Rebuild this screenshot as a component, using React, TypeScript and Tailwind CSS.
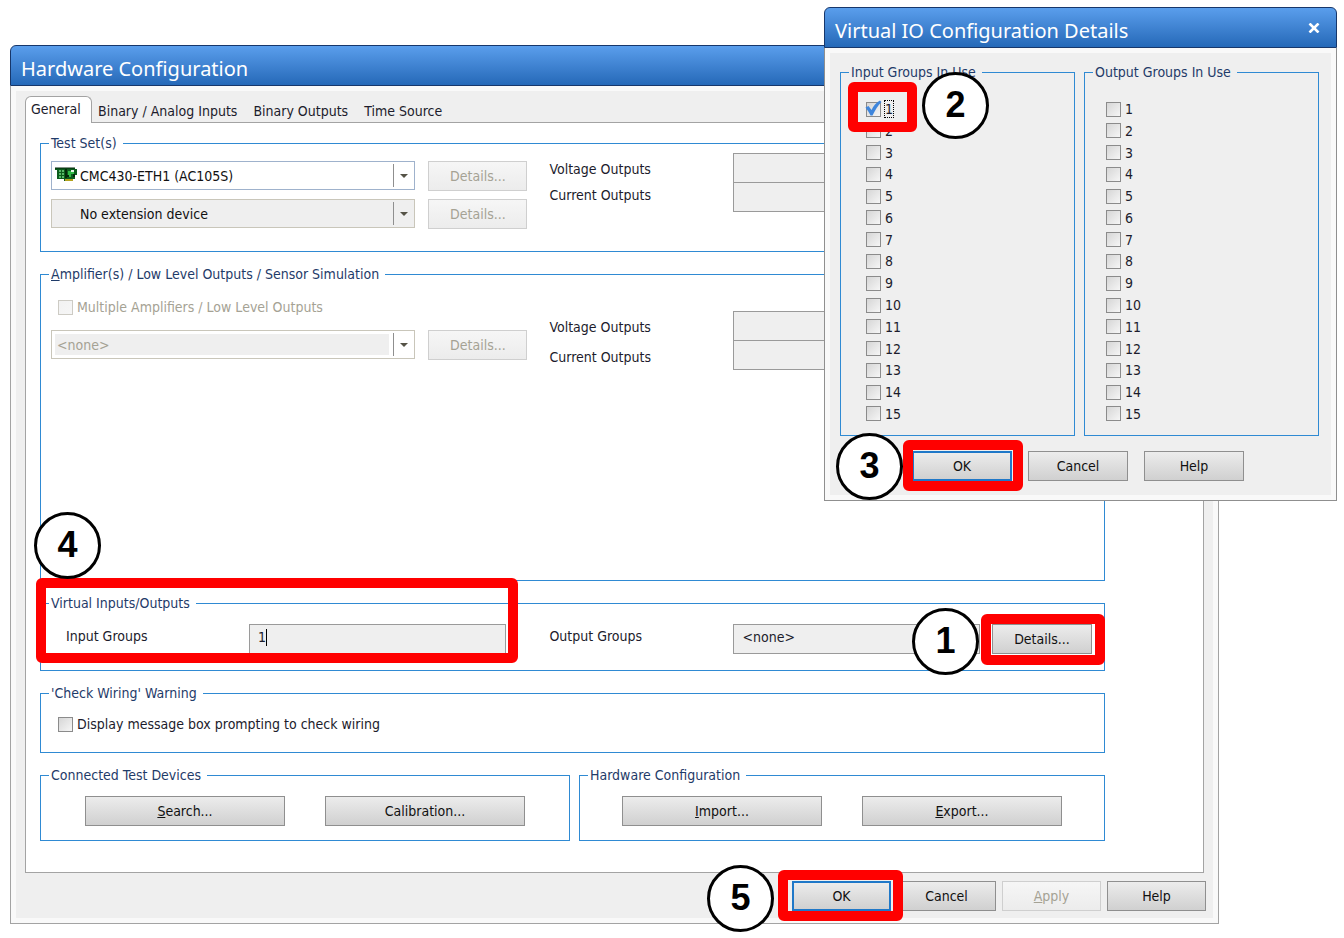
import { useState } from 'react';
import type { ReactNode } from 'react';
import clsx from 'clsx';

const GROUPS = Array.from({ length: 15 }, (_, i) => i + 1);

function Step({ n, className }: { n: number; className: string }) {
  return (
    <span
      className={clsx(
        'absolute z-20 flex size-[67px] items-center justify-center rounded-full border-[3px] border-black bg-white pb-[2px] font-["Liberation_Sans",sans-serif] text-[36px] leading-none font-bold text-black',
        className,
      )}
    >
      {n}
    </span>
  );
}

function Ring({ className }: { className: string }) {
  return <span className={clsx('pointer-events-none absolute z-10 rounded-md border-10 border-[#ff0000]', className)} />;
}

function TitleBar({ title, children }: { title: string; children?: ReactNode }) {
  return (
    <header className="flex h-[41px] items-center justify-between rounded-t-md border border-[#17376b] bg-linear-to-b from-[#5a9eec] to-[#2569b8] pr-4 pl-[10px]">
      <h1 className="pt-[6px] font-['Noto_Sans',sans-serif] text-xl leading-7 text-white">{title}</h1>
      {children}
    </header>
  );
}

function GroupBox({ title, className, children }: { title: ReactNode; className?: string; children: ReactNode }) {
  return (
    <fieldset className={clsx('relative min-w-0 border border-[#2f8ad3] px-[10px]', className)}>
      <legend className="-ml-[2px] pr-[6px] pl-[2px] leading-5 text-[#1f3b69]">{title}</legend>
      {children}
    </fieldset>
  );
}

type ButtonProps = {
  children: ReactNode;
  className?: string;
  disabled?: boolean;
  primary?: boolean;
};

function Button({ children, className, disabled, primary }: ButtonProps) {
  return (
    <button
      type="button"
      disabled={disabled}
      className={clsx(
        'h-[30px] shrink-0 border bg-linear-to-b text-center leading-5',
        disabled
          ? 'border-[#cfcfcf] from-[#f6f6f6] to-[#ececec] text-[#a5a294]'
          : 'from-[#ececec] to-[#d0d0d0] text-[#111]',
        !disabled && (primary ? 'border-2 border-[#1f78c8]' : 'border-[#8f8f8f]'),
        className,
      )}
    >
      {children}
    </button>
  );
}

type CheckBoxProps = {
  label: string;
  checked?: boolean;
  disabled?: boolean;
  focused?: boolean;
  className?: string;
};

function CheckBox({ label, checked = false, disabled, focused, className }: CheckBoxProps) {
  const [on, setOn] = useState(checked);
  return (
    <label className={clsx('flex h-4 items-center gap-1 leading-4', disabled && 'text-[#a5a294]', className)}>
      <span className="relative flex size-[15px]">
        <input
          type="checkbox"
          checked={on}
          disabled={disabled}
          onChange={(e) => setOn(e.target.checked)}
          className="size-[15px] appearance-none border border-[#8b8b8b] bg-linear-to-br from-[#d6d6d6] to-[#f6f6f6] disabled:border-[#cdcbc4] disabled:from-[#f2f2f2]"
        />
        {on && (
          <svg viewBox="0 0 17 17" className="pointer-events-none absolute -top-[2px] -left-px size-[17px]">
            <path d="M0.5 7.5L3.5 6L6.500 10C8.500 6 11 2.500 15 0.500L16.500 2C13 5 10 10.500 7.500 15.500L5.500 15.500C4 12.500 2.500 10 0.500 7.500Z" fill="#3f86dc" />
          </svg>
        )}
      </span>
      <span className={clsx(focused && 'outline-1 outline-dotted outline-black')}>{label}</span>
    </label>
  );
}

type ComboProps = {
  label: string;
  options: string[];
  icon?: ReactNode;
  variant: 'active' | 'plain' | 'disabled';
};

function Combo({ label, options, icon, variant }: ComboProps) {
  return (
    <div
      className={clsx(
        'relative h-[29px] min-w-0 flex-1 border',
        variant === 'active' && 'border-[#9fb2cc] bg-white',
        variant === 'plain' && 'border-[#c9c6ba] bg-[#efefef]',
        variant === 'disabled' && 'border-[#c9c6ba] bg-white p-[3px] pr-[25px]',
      )}
    >
      <select
        aria-label={label}
        disabled={variant === 'disabled'}
        className={clsx(
          'size-full appearance-none',
          variant === 'disabled' ? 'bg-[#efefef] pl-[2px] text-[#a5a294] opacity-100' : 'pl-7 text-[#111]',
        )}
      >
        {options.map((o) => (
          <option key={o}>{o}</option>
        ))}
      </select>
      {icon}
      <span className="pointer-events-none absolute inset-y-[2px] right-0 flex w-[21px] items-center justify-center border-l border-[#8f8f8f]">
        <svg viewBox="0 0 8 4" className="h-1 w-2">
          <path d="M0 0H8L4 4Z" fill="#555347" />
        </svg>
      </span>
    </div>
  );
}

function BoardIcon() {
  return (
    <svg viewBox="0 0 22 16" className="pointer-events-none absolute top-[5px] left-[3px] h-4 w-[22px]">
      <path d="M0 1H20V2H22V8H20V12H18V14H9V12H2V3H0Z" fill="#0b5c1c" />
      <path d="M4 3H6V5H4ZM7 3H9V5H7ZM4 6H6V8H4ZM7 6H9V8H7ZM4 9H6V11H4ZM7 9H9V11H7Z" fill="#58b868" />
      <path d="M10 2H12V11H10Z" fill="#032a0a" />
      <path d="M13 4H16V3H19V7H16V10H13Z" fill="#2fb845" />
      <path d="M16 3H19V5H16Z" fill="#e8f5e9" />
      <path d="M12 8H14V10H12ZM18 7H20V10H18Z" fill="#04260a" />
      <path d="M10 12H18V14H10Z" fill="#b3a21c" />
      <path d="M0 1H20" stroke="#04260a" />
    </svg>
  );
}

function OutputRows({ id, spread }: { id: string; spread?: boolean }) {
  return (
    <div className="flex min-w-0">
      <div className={clsx('flex w-[184px] shrink-0 flex-col pt-[6px]', spread ? 'gap-[10px]' : 'gap-[6px]')}>
        <label htmlFor={`${id}-voltage`} className="leading-5">Voltage Outputs</label>
        <label htmlFor={`${id}-current`} className="leading-5">Current Outputs</label>
      </div>
      <div className="flex min-w-0 flex-1 flex-col">
        <input id={`${id}-voltage`} readOnly className="h-[30px] w-full border border-[#9a9a9a] bg-[#efefef] px-2" />
        <input id={`${id}-current`} readOnly className="-mt-px h-[30px] w-full border border-[#9a9a9a] bg-[#efefef] px-2" />
      </div>
    </div>
  );
}

function HardwareWindow() {
  return (
    <section className="mr-[125px] ml-[10px] flex flex-col">
      <TitleBar title="Hardware Configuration" />
      <div className="border border-t-0 border-[#a3a3a3] bg-[#efefef] px-[14px] pt-[10px] pb-3 shadow-[inset_0_0_0_5px_#f9f9f9]">
        <nav className="relative z-[1] -mb-px flex items-end">
          <button type="button" className="h-[27px] w-[67px] rounded-t-md border border-b-0 border-[#a3a3a3] bg-white pb-[2px] pl-[5px] text-left leading-5">
            General
          </button>
          <div className="flex gap-4 pb-[2px] pl-[6px]">
            {['Binary / Analog Inputs', 'Binary Outputs', 'Time Source'].map((tab) => (
              <button key={tab} type="button" className="leading-5">{tab}</button>
            ))}
          </div>
        </nav>

        <div className="flex flex-col gap-3 border border-[#a3a3a3] bg-white pt-[10px] pr-[98px] pb-[31px] pl-[14px]">
          <GroupBox title="Test Set(s)" className="h-[119px]">
            <div className="grid grid-cols-[7fr_8fr] gap-x-[22px]">
              <div className="flex flex-col gap-2 pt-2">
                <div className="flex items-start gap-[13px]">
                  <Combo label="Test set" variant="active" options={['CMC430-ETH1 (AC105S)']} icon={<BoardIcon />} />
                  <Button disabled className="w-[99px]">Details...</Button>
                </div>
                <div className="flex items-start gap-[13px]">
                  <Combo label="Extension device" variant="plain" options={['No extension device']} />
                  <Button disabled className="w-[99px]">Details...</Button>
                </div>
              </div>
              <OutputRows id="test-set" />
            </div>
          </GroupBox>

          <GroupBox title={<><u>A</u>mplifier(s) / Low Level Outputs / Sensor Simulation</>} className="h-[317px]">
            <div className="grid grid-cols-[7fr_8fr] gap-x-[22px] pt-[15px]">
              <div className="flex flex-col gap-[15px]">
                <CheckBox label="Multiple Amplifiers / Low Level Outputs" disabled className="pl-[7px]" />
                <div className="flex items-start gap-[13px]">
                  <Combo label="Amplifier" variant="disabled" options={['<none>']} />
                  <Button disabled className="w-[99px]">Details...</Button>
                </div>
              </div>
              <div className="pt-3">
                <OutputRows id="amplifier" spread />
              </div>
            </div>
          </GroupBox>

          <GroupBox title="Virtual Inputs/Outputs" className="h-[78px]">
            <Ring className="-top-[35px] -left-[5px] h-[85px] w-[calc(45%+4px)]" />
            <Step n={4} className="-top-[101px] -left-[7px]" />
            <div className="grid grid-cols-[7fr_8fr] gap-x-[22px] pt-[11px]">
              <div className="flex pr-[21px] pl-[15px]">
                <label htmlFor="input-groups" className="w-[183px] shrink-0 pt-[2px] leading-5">Input Groups</label>
                <div className="flex h-[30px] min-w-0 flex-1 items-center border border-[#9a9a9a] bg-[#efefef] pb-1 pl-2">
                  <input id="input-groups" size={1} readOnly value="1" className="w-2 outline-none" />
                  <span className="h-[17px] w-px bg-black" />
                </div>
              </div>
              <div className="flex">
                <label htmlFor="output-groups" className="w-[184px] shrink-0 pt-[2px] leading-5">Output Groups</label>
                <input id="output-groups" readOnly value="<none>" className="h-[30px] min-w-0 flex-1 border border-[#9a9a9a] bg-[#efefef] px-2 pb-1 outline-none" />
                <div className="relative mr-[2px] ml-3">
                  <Button className="w-[100px]">Details...</Button>
                  <Ring className="-top-[10px] -right-[13px] -bottom-[11px] -left-[11px]" />
                  <Step n={1} className="-top-[16px] right-[113px]" />
                </div>
              </div>
            </div>
          </GroupBox>

          <GroupBox title="'Check Wiring' Warning" className="h-[70px]">
            <CheckBox label="Display message box prompting to check wiring" className="mt-[13px] pl-[7px]" />
          </GroupBox>

          <div className="grid grid-cols-[530fr_526fr] gap-[9px]">
            <GroupBox title="Connected Test Devices" className="h-[76px]">
              <div className="flex justify-center gap-10 pt-[11px]">
                <Button className="w-[200px]"><u>S</u>earch...</Button>
                <Button className="w-[200px]">Calibration...</Button>
              </div>
            </GroupBox>
            <GroupBox title="Hardware Configuration" className="h-[76px]">
              <div className="flex justify-center gap-10 pt-[11px]">
                <Button className="w-[200px]"><u>I</u>mport...</Button>
                <Button className="w-[200px]"><u>E</u>xport...</Button>
              </div>
            </GroupBox>
          </div>
        </div>

        <footer className="-mr-[2px] flex justify-end gap-[6px] pt-2">
          <div className="relative">
            <Button primary className="w-[99px]">OK</Button>
            <Ring className="-top-[11px] -right-[12px] -bottom-[10px] -left-[14px]" />
            <Step n={5} className="-top-[16px] right-[117px]" />
          </div>
          <Button className="w-[99px]">Cancel</Button>
          <Button disabled className="w-[99px]"><u>A</u>pply</Button>
          <Button className="w-[99px]">Help</Button>
        </footer>
      </div>
    </section>
  );
}

function GroupList({ title, checked, className }: { title: string; checked?: number; className: string }) {
  return (
    <GroupBox title={title} className="min-w-0 flex-1 pb-[13px]">
      <div className={clsx('box-content flex h-[321px] flex-col justify-between pt-[19px]', className)}>
        {GROUPS.map((n) => (
          <CheckBox key={n} label={String(n)} checked={n === checked} focused={n === checked} />
        ))}
      </div>
    </GroupBox>
  );
}

function DetailsDialog() {
  return (
    <section role="dialog" aria-label="Virtual IO Configuration Details" className="absolute top-[7px] right-[7px] z-30 w-[513px]">
      <TitleBar title="Virtual IO Configuration Details">
        <button type="button" aria-label="Close">
          <svg viewBox="0 0 12 10" className="h-[10px] w-3">
            <path d="M1.500 0.500L10.500 9.500M10.500 0.500L1.500 9.500" stroke="white" strokeWidth="2.600" />
          </svg>
        </button>
      </TitleBar>
      <div className="border border-t-0 border-[#8f8f8f] bg-[#efefef] pt-[14px] pr-[17px] pb-[19px] pl-[15px] shadow-[inset_0_0_0_5px_#f9f9f9]">
        <div className="relative flex gap-[9px]">
          <GroupList title="Input Groups In Use" checked={1} className="pl-[15px]" />
          <GroupList title="Output Groups In Use" className="pl-[11px]" />
          <Ring className="top-5 left-2 h-[50px] w-[69px]" />
          <Step n={2} className="top-[10px] left-[82px]" />
        </div>
        <div className="flex gap-4 pt-[15px] pl-[72px]">
          <div className="relative">
            <Button primary className="w-[100px]">OK</Button>
            <Ring className="-top-[11px] -right-[11px] -bottom-[10px] -left-[9px]" />
            <Step n={3} className="-top-[18px] right-[109px]" />
          </div>
          <Button className="w-[100px]">Cancel</Button>
          <Button className="w-[100px]">Help</Button>
        </div>
      </div>
    </section>
  );
}

export default function App() {
  return (
    <main className="relative min-h-screen min-w-[1200px] bg-white pt-[45px] pb-[14px] font-['DejaVu_Sans_Condensed','DejaVu_Sans',sans-serif] text-sm text-[#1c1c2c]">
      <HardwareWindow />
      <DetailsDialog />
    </main>
  );
}
